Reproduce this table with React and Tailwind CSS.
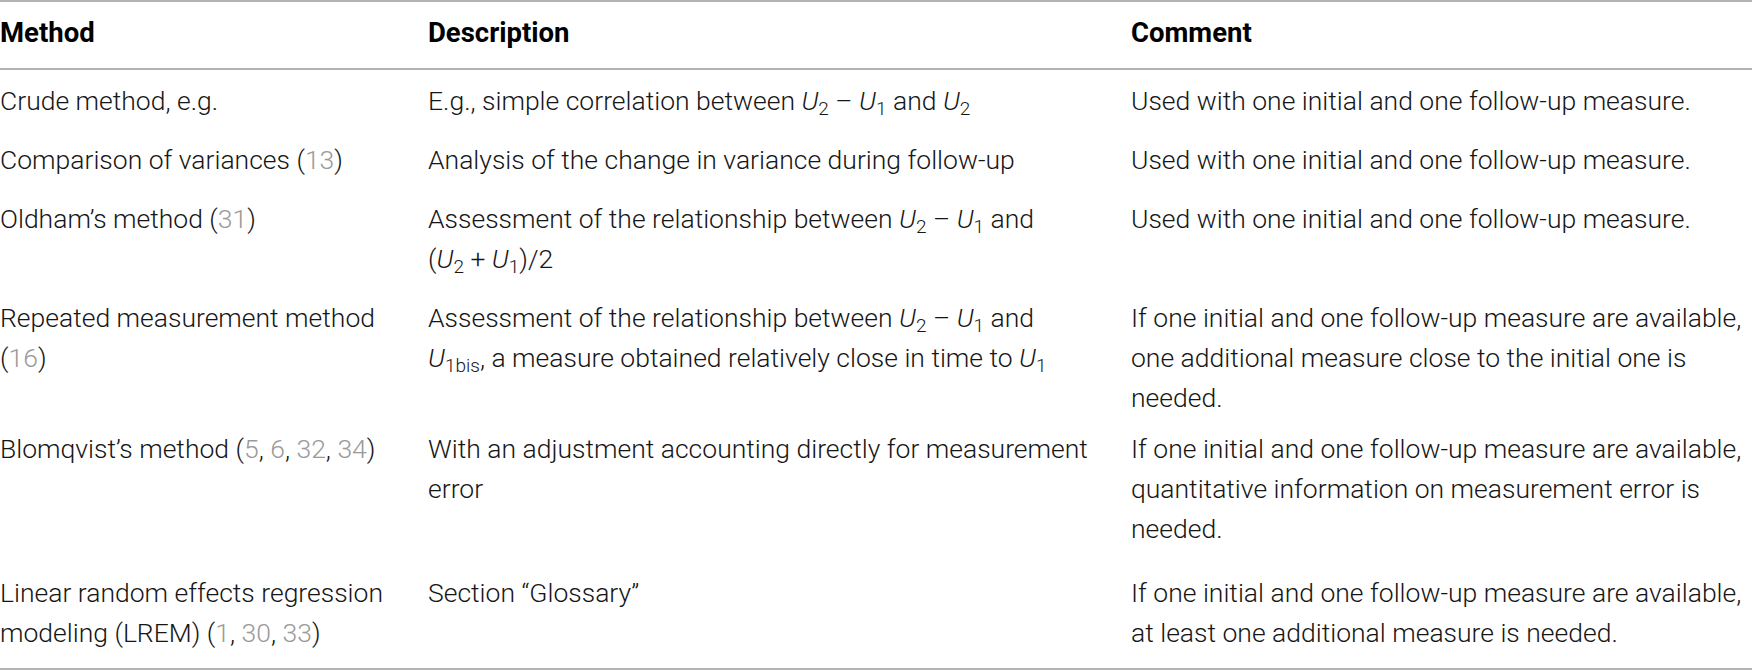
import React from 'react';

const Ref = ({ children }) => <span className="text-[#9a9a9a]">{children}</span>;

const U = ({ s }) => (
    <span className="whitespace-nowrap">
        <i>U</i>
        <sub className="text-[19px]">{s}</sub>
    </span>
);

const rows = [
    {
        pad: 'pt-[11px] pb-[8px]',
        method: <>Crude method, e.g.</>,
        desc: <>E.g., simple correlation between <U s="2" /> – <U s="1" /> and <U s="2" /></>,
        comment: <>Used with one initial and one follow-up measure.</>,
    },
    {
        pad: 'pt-[11px] pb-[8px]',
        method: <>Comparison of variances (<Ref>13</Ref>)</>,
        desc: <>Analysis of the change in variance during follow-up</>,
        comment: <>Used with one initial and one follow-up measure.</>,
    },
    {
        pad: 'pt-[11px] pb-[8px]',
        method: <>Oldham’s method (<Ref>31</Ref>)</>,
        desc: <>Assessment of the relationship between <U s="2" /> – <U s="1" /> and<br />(<U s="2" /> + <U s="1" />)/2</>,
        comment: <>Used with one initial and one follow-up measure.</>,
    },
    {
        pad: 'pt-[11px] pb-0',
        method: <>Repeated measurement method<br />(<Ref>16</Ref>)</>,
        desc: <>Assessment of the relationship between <U s="2" /> – <U s="1" /> and<br /><U s="1bis" />, a measure obtained relatively close in time to <U s="1" /></>,
        comment: <>If one initial and one follow-up measure are available,<br />one additional measure close to the initial one is<br />needed.</>,
    },
    {
        pad: 'pt-[11px] pb-[13px]',
        method: <>Blomqvist’s method (<Ref>5</Ref>, <Ref>6</Ref>, <Ref>32</Ref>, <Ref>34</Ref>)</>,
        desc: <>With an adjustment accounting directly for measurement<br />error</>,
        comment: <>If one initial and one follow-up measure are available,<br />quantitative information on measurement error is<br />needed.</>,
    },
    {
        pad: 'pt-[11px] pb-[15px]',
        method: <>Linear random effects regression<br />modeling (LREM) (<Ref>1</Ref>, <Ref>30</Ref>, <Ref>33</Ref>)</>,
        desc: <>Section “Glossary”</>,
        comment: <>If one initial and one follow-up measure are available,<br />at least one additional measure is needed.</>,
    },
];

export default function App() {
    return (
        <div className="w-[1752px] h-[670px] bg-white text-[#161616] font-['Roboto','Liberation_Sans',sans-serif] font-light text-[26.5px] leading-[40px]">
            <div className="border-t-2 border-b-2 border-[#b3b3b3]">
                {/* header */}
                <div className="grid grid-cols-[428px_703px_1fr] border-b-2 border-[#b3b3b3] pt-[11px] pb-[15px] font-bold text-[27.5px] text-black">
                    <div>Method</div>
                    <div>Description</div>
                    <div>Comment</div>
                </div>

                {rows.map((row, i) => (
                    <div key={i} className={`grid grid-cols-[428px_703px_1fr] whitespace-nowrap ${row.pad}`}>
                        <div>{row.method}</div>
                        <div>{row.desc}</div>
                        <div>{row.comment}</div>
                    </div>
                ))}
            </div>
        </div>
    );
}
